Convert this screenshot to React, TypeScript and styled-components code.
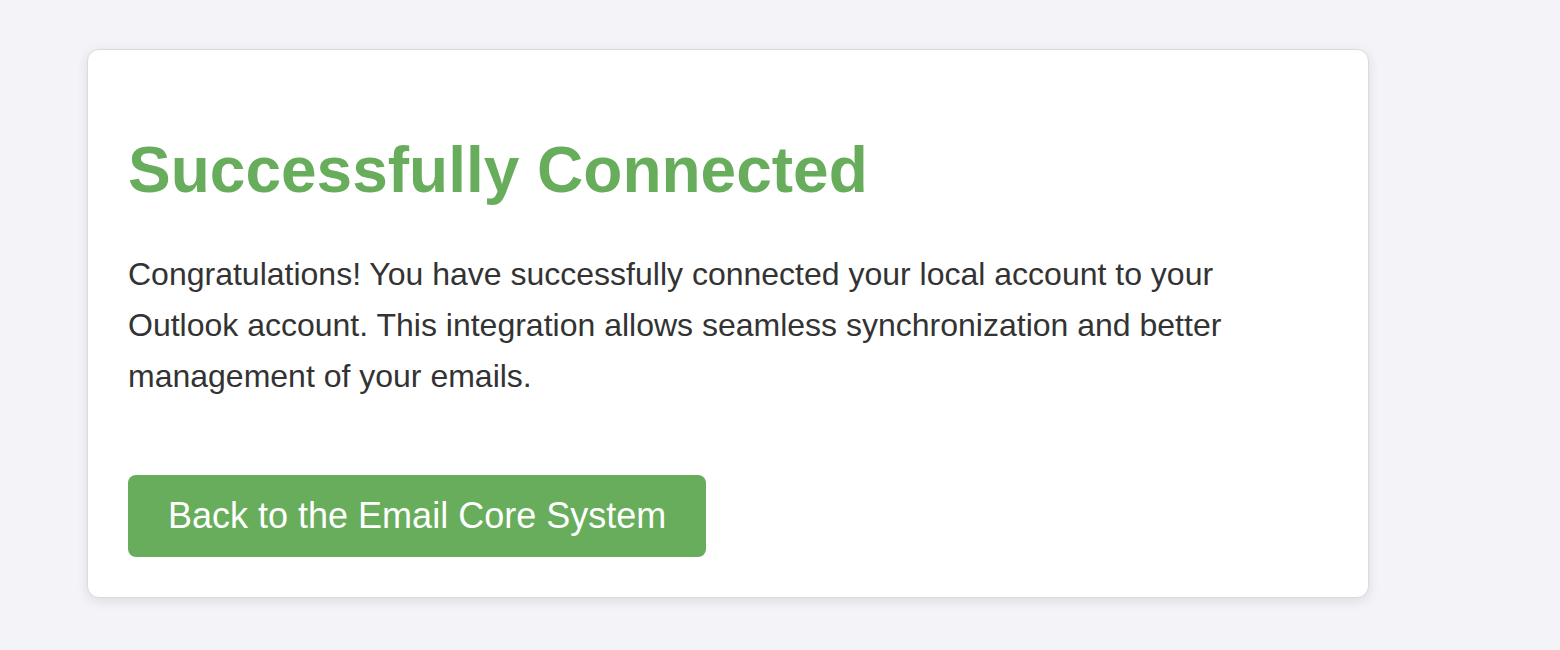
import React from "react";
import styled, { createGlobalStyle } from "styled-components";

const GlobalStyle = createGlobalStyle`
  html, body {
    margin: 0;
    padding: 0;
    background: #f4f4f8;
    font-family: "Liberation Sans", Arial, Helvetica, sans-serif;
  }
`;

const Page = styled.div`
  padding: 49px 0 0 87px;
  min-height: 650px;
  box-sizing: border-box;
`;

const Card = styled.section`
  width: 1200px;
  padding: 40px;
  background: #ffffff;
  border: 1px solid #dadada;
  border-radius: 12px;
  box-shadow: 0 3px 12px rgba(0, 0, 0, 0.1);
`;

const Title = styled.h1`
  margin: 43px 0 42px;
  font-size: 64px;
  font-weight: 700;
  line-height: normal;
  color: #67ad5c;
`;

const Message = styled.p`
  margin: 0;
  font-size: 32px;
  line-height: 1.6;
  color: #333333;
`;

const Actions = styled.div`
  display: flex;
  margin-top: 72px;
`;

const Button = styled.a`
  display: inline-block;
  padding: 20px 40px;
  font-size: 36px;
  line-height: normal;
  color: #ffffff;
  background: #67ad5c;
  border-radius: 8px;
  text-decoration: none;
  cursor: pointer;
`;

export default function App() {
  return (
    <>
      <GlobalStyle />
      <Page>
        <Card>
          <Title>Successfully Connected</Title>
          <Message>
            Congratulations! You have successfully connected your local account to your
            Outlook account. This integration allows seamless synchronization and better
            management of your emails.
          </Message>
          <Actions>
            <Button href="#">Back to the Email Core System</Button>
          </Actions>
        </Card>
      </Page>
    </>
  );
}
